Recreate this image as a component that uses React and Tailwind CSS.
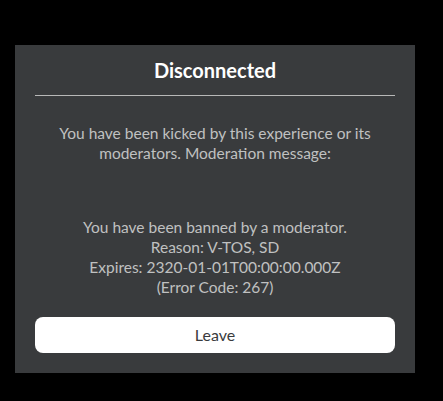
export default function App() {
  return (
    <div className="w-[443px] h-[401px] bg-black pt-[45px] pl-[15px]" style={{ fontFamily: "Lato, 'Noto Sans', sans-serif" }}>
      <div className="w-[400px] h-[328px] bg-[#393b3d] flex flex-col px-5 pb-5">
        <div className="h-[50px] flex items-center justify-center text-white font-bold text-[20px]">
          Disconnected
        </div>
        <div className="h-px bg-[#b8b8b8]" />
        <div className="mt-[27px] text-center text-[#c0c1c1] text-[15.5px] leading-[20px]">
          <p>You have been kicked by this experience or its</p>
          <p>moderators. Moderation message:</p>
        </div>
        <div className="mt-[54px] text-center text-[#c0c1c1] text-[15.5px] leading-[20px]">
          <p>You have been banned by a moderator.</p>
          <p>Reason: V-TOS, SD</p>
          <p>Expires: 2320-01-01T00:00:00.000Z</p>
          <p>(Error Code: 267)</p>
        </div>
        <button className="mt-auto h-[36px] w-full rounded-[8px] bg-white text-[#393b3d] text-[16px]">
          Leave
        </button>
      </div>
    </div>
  );
}
